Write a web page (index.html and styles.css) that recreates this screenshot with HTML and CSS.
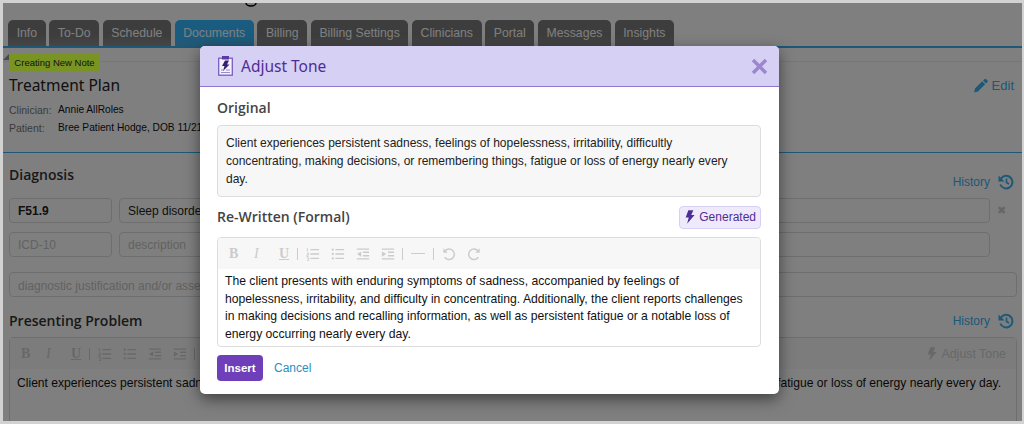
FILE: index.html
```html
<!DOCTYPE html>
<html lang="en">
<head>
<meta charset="utf-8">
<title>Adjust Tone</title>
<link rel="stylesheet" href="styles.css">
</head>
<body>
<svg class="defs" width="0" height="0" aria-hidden="true">
  <defs>
    <symbol id="i-ol" viewBox="0 0 16 16"><path d="M5 3h10M5 8h10M5 13h10" stroke="currentColor" stroke-width="1.5" fill="none"/><path d="M1.5 1v4M1 7h2v2H1v2h2M1 12.500h2v3H1" stroke="currentColor" stroke-width="1" fill="none"/></symbol>
    <symbol id="i-ul" viewBox="0 0 16 16"><path d="M5 3h10M5 8h10M5 13h10" stroke="currentColor" stroke-width="1.500" fill="none"/><circle cx="2" cy="3" r="1.300" fill="currentColor"/><circle cx="2" cy="8" r="1.300" fill="currentColor"/><circle cx="2" cy="13" r="1.300" fill="currentColor"/></symbol>
    <symbol id="i-out" viewBox="0 0 16 16"><path d="M1 2.500h14M8 6h7M8 10h7M1 13.500h14" stroke="currentColor" stroke-width="1.500" fill="none"/><path d="M6 5v6L1 8z" fill="currentColor"/></symbol>
    <symbol id="i-in" viewBox="0 0 16 16"><path d="M1 2.500h14M8 6h7M8 10h7M1 13.500h14" stroke="currentColor" stroke-width="1.500" fill="none"/><path d="M1 5v6l5-3z" fill="currentColor"/></symbol>
    <symbol id="i-undo" viewBox="0 0 16 16"><path d="M3.500 4.500A6 6 0 1 1 3 11.500" stroke="currentColor" stroke-width="1.700" fill="none"/><path d="M1.500 1.500v5h5z" fill="currentColor"/></symbol>
    <symbol id="i-redo" viewBox="0 0 16 16"><path d="M12.500 4.500A6 6 0 1 0 13 11.500" stroke="currentColor" stroke-width="1.700" fill="none"/><path d="M14.500 1.500v5h-5z" fill="currentColor"/></symbol>
    <symbol id="i-bolt" viewBox="0 0 12 16"><path d="M4 0h6L7.500 5.500H11.500L2.500 16 4.500 8.500H.8z" fill="currentColor"/></symbol>
    <symbol id="i-hist" viewBox="0 0 16 16"><path d="M3 4.500A6.300 6.300 0 1 1 2.300 10.500" stroke="currentColor" stroke-width="2" fill="none"/><path d="M.5 1.500v6h6z" fill="currentColor"/><path d="M8.500 4.500v4l2.500 1.500" stroke="currentColor" stroke-width="1.600" fill="none"/></symbol>
  </defs>
</svg>

<div class="frame">
  <div class="page">
    <div class="topbar"><svg class="arc" width="12" height="4" viewBox="0 0 12 4"><path d="M1 0a5 3 0 0 0 10 0" stroke="#000" stroke-width="1.500" fill="none"/></svg></div>
    <nav class="tabs">
      <a class="tab">Info</a><a class="tab">To-Do</a><a class="tab">Schedule</a><a class="tab tab-active">Documents</a><a class="tab">Billing</a><a class="tab">Billing Settings</a><a class="tab">Clinicians</a><a class="tab">Portal</a><a class="tab">Messages</a><a class="tab">Insights</a>
    </nav>
    <div class="note-bar"><span class="ribbon">Creating New Note</span></div>
    <section class="plan">
      <div class="plan-title">
        <h1>Treatment Plan</h1>
        <a class="link edit"><svg width="14" height="15" viewBox="0 0 16 16"><path d="M11.800.8a1.500 1.500 0 0 1 2.100 0l1.300 1.300a1.500 1.500 0 0 1 0 2.100L13.700 5.700 10.300 2.300zM9.400 3.200l3.400 3.400-8.300 8.300-4.300 1 .9-4.400z" fill="currentColor"/></svg>Edit</a>
      </div>
      <dl class="meta"><dt>Clinician:</dt><dd>Annie AllRoles</dd></dl>
      <dl class="meta"><dt>Patient:</dt><dd>Bree Patient Hodge, DOB 11/21/1990</dd></dl>
    </section>
    <section class="main">
      <div class="sec-head"><h2>Diagnosis</h2><a class="link hist hist-low">History<svg width="16" height="16"><use href="#i-hist"/></svg></a></div>
      <div class="dx-row"><div class="field code">F51.9</div><div class="field desc">Sleep disorder not due to a substance or known physiological condition, unspecified</div><span class="remove">&#10006;</span></div>
      <div class="dx-row"><div class="field code ph">ICD-10</div><div class="field desc ph">description</div><span class="remove"></span></div>
      <div class="field just ph">diagnostic justification and/or assessment</div>
      <div class="sec-head sec-two"><h2>Presenting Problem</h2><a class="link hist">History<svg width="16" height="16"><use href="#i-hist"/></svg></a></div>
      <div class="bg-editor">
        <div class="bg-toolbar">
          <span class="tb tb-b">B</span><span class="tb tb-i">I</span><span class="tb tb-u">U</span><span class="sep"></span>
          <svg class="ic"><use href="#i-ol"/></svg><svg class="ic"><use href="#i-ul"/></svg><svg class="ic"><use href="#i-out"/></svg><svg class="ic"><use href="#i-in"/></svg><span class="sep"></span>
          <span class="adjust"><svg width="10" height="14"><use href="#i-bolt"/></svg>Adjust Tone</span>
        </div>
        <p class="bg-text">Client experiences persistent sadness, feelings of hopelessness, irritability, difficultly concentrating, making decisions, or remembering things, fatigue or loss of energy nearly every day.</p>
      </div>
    </section>
    <div class="overlay"></div>
    <div class="modal">
      <header class="m-head">
        <div class="m-title">
          <svg width="15" height="20" viewBox="0 0 15 20"><rect x=".7" y="2.200" width="13.600" height="17" fill="#f4f1fd" stroke="#7a5cc0" stroke-width="1.300"/><rect x="4" y="0" width="7" height="3.500" fill="#5b3aa6"/><path d="M7 4.500h4L9 8.500h2.500L5 15l1.500-5H4z" fill="#33206e"/><path d="M3 14h3M8 14h4M3 16.500h9" stroke="#9a8bc9" stroke-width="1"/></svg>
          <span>Adjust Tone</span>
        </div>
        <svg class="m-close" width="17" height="17" viewBox="0 0 17 17"><path d="M2 2l13 13M15 2L2 15" stroke="currentColor" stroke-width="3.400"/></svg>
      </header>
      <div class="m-body">
        <h3>Original</h3>
        <div class="orig">Client experiences persistent sadness, feelings of hopelessness, irritability, difficultly concentrating, making decisions, or remembering things, fatigue or loss of energy nearly every day.</div>
        <div class="rw-head">
          <h3>Re-Written (Formal)</h3>
          <span class="gen"><svg width="10" height="14"><use href="#i-bolt"/></svg>Generated</span>
        </div>
        <div class="m-editor">
          <div class="m-toolbar">
            <span class="tb tb-b">B</span><span class="tb tb-i">I</span><span class="tb tb-u">U</span><span class="sep"></span>
            <svg class="ic"><use href="#i-ol"/></svg><svg class="ic"><use href="#i-ul"/></svg><svg class="ic"><use href="#i-out"/></svg><svg class="ic"><use href="#i-in"/></svg><span class="sep"></span>
            <span class="dash"></span><span class="sep"></span>
            <svg class="ic"><use href="#i-undo"/></svg><svg class="ic"><use href="#i-redo"/></svg>
          </div>
          <p class="rw-text">The client presents with enduring symptoms of sadness, accompanied by feelings of hopelessness, irritability, and difficulty in concentrating. Additionally, the client reports challenges in making decisions and recalling information, as well as persistent fatigue or a notable loss of energy occurring nearly every day.</p>
        </div>
        <div class="m-actions"><button class="insert" type="button">Insert</button><a class="cancel">Cancel</a></div>
      </div>
    </div>
  </div>
</div>
</body>
</html>
```
FILE: styles.css
```css
* { box-sizing: border-box; }
html, body { margin: 0; height: 424px; overflow: hidden; }
body { font-family: "Liberation Sans", Arial, sans-serif; background: #d2d2d2; }
.defs { position: absolute; }
.frame { height: 424px; padding: 3px 2px 3px 3px; }
.page { position: relative; height: 418px; background: #fff; overflow: hidden; color: #222; }
.topbar { height: 17px; padding-left: 242px; line-height: 0; }
.arc { display: block; }
.tabs { display: flex; gap: 3.500px; padding-left: 5px; height: 28px; border-bottom: 2px solid #3bb0f0; }
.tab { height: 26px; padding: 0 8.650px; border-radius: 5px 5px 0 0; background: linear-gradient(#7a7a7a 55%, #8c8c8c); color: #fff; font-size: 12.250px; line-height: 26px; }
.tab-active { background: linear-gradient(#34b8ff 70%, #4fb0e0); }
.note-bar { height: 14px; border-bottom: 1px solid #eee; padding-left: 6px; position: relative; }
.ribbon { display: block; width: 91px; height: 17px; margin-top: 6px; position: absolute; background: #7a9424; color: #111; font-size: 9.500px; line-height: 18px; text-align: center; z-index: 1; }
.ribbon::before { content: ""; position: absolute; left: -6px; top: 0; border: 3px solid transparent; border-right-color: #4a4a4a; border-bottom-color: #4a4a4a; }
.plan { height: 91px; padding: 12px 8px 0 6px; border-bottom: 1px solid #3bb0f0; }
.plan-title { display: flex; justify-content: space-between; align-items: center; height: 22px; margin-bottom: 8px; }
h1 { margin: 0; font: 400 15.500px/22px "Noto Sans", sans-serif; color: #222; }
.link { color: #3ab0ee; font-size: 13px; display: flex; align-items: center; }
.edit { gap: 4px; }
.meta { display: flex; margin: 0 0 6px; font-size: 10.500px; line-height: 12px; }
.meta dt { width: 49px; color: #777; }
.meta dd { margin: 0; color: #111; font-size: 10.200px; }
.main { padding: 11px 5px 0 6px; }
.sec-head { display: flex; justify-content: space-between; align-items: center; height: 22px; margin-bottom: 12px; padding-right: 3px; }
h2 { margin: 0; font: 600 14px/22px "Open Sans", "Noto Sans", sans-serif; color: #333; }
.hist { gap: 8px; font-size: 12px; }
.hist-low { margin-top: 13px; }
.dx-row { display: flex; gap: 7px; margin-bottom: 9px; align-items: center; }
.field { height: 25px; border: 1px solid #ddd; border-radius: 4px; padding: 0 8px; font-size: 12px; line-height: 24px; color: #222; white-space: nowrap; overflow: hidden; background: #fff; }
.ph { color: #c4c4c4; }
.code { width: 103px; font-weight: 700; }
.code.ph { font-weight: 400; }
.desc { flex: 1; }
.remove { width: 20px; font-size: 11px; color: #ccc; }
.just { margin-top: 15px; line-height: 26px; }
.sec-two { margin-top: 13px; margin-bottom: 5px; }
.bg-editor { height: 90px; border: 1px solid #ddd; border-radius: 4px; }
.bg-toolbar { display: flex; align-items: center; height: 31px; padding: 0 10px; background: #f9f9f9; color: #d0d0d0; }
.bg-text { margin: 0; padding: 5px 7px; font-size: 12.120px; line-height: 18px; white-space: nowrap; color: #111; }
.adjust { margin-left: auto; display: flex; gap: 4px; align-items: center; font-size: 12.400px; color: #d0d0d0; }
.tb { width: 25px; text-align: left; padding-left: 1px; font: 700 14px/1 "Liberation Serif", serif; }
.tb-i { font-style: italic; font-weight: 400; }
.tb-u { text-decoration: underline; width: 19px; }
.sep { width: 1px; height: 12px; background: currentColor; margin: 0 8px 0 -4px; }
.tb + .sep { margin-left: 0; }
.dash + .sep { margin-left: -3px; }
.ic { width: 14px; height: 14px; margin-right: 11px; }
.dash { width: 14px; height: 1.500px; background: currentColor; margin-right: 11px; }
.overlay { position: absolute; inset: 0; background: rgba(0, 0, 0, .5); }
.modal { position: absolute; left: 197px; top: 43px; width: 579px; height: 348px; background: #fff; border-radius: 5px; box-shadow: 0 5px 15px rgba(0, 0, 0, .5); overflow: hidden; z-index: 2; }
.m-head { display: flex; justify-content: space-between; align-items: center; height: 41px; padding: 0 11px 0 18px; background: #d6d0f5; border-bottom: 1px solid #8f74cf; }
.m-title { display: flex; align-items: center; gap: 8px; font: 400 15.500px/22px "Noto Sans", sans-serif; color: #4f2d96; }
.m-close { color: #9c86d0; }
.m-body { padding: 11px 18px 0 17px; }
h3 { margin: 0; font: 600 14px/20px "Open Sans", "Noto Sans", sans-serif; color: #444; }
.orig { height: 72px; margin-top: 7px; padding: 8px 20px 8px 8px; border: 1px solid #ddd; border-radius: 4px; background: #f7f7f7; font-size: 12.030px; line-height: 18px; color: #222; }
.rw-head { display: flex; justify-content: space-between; align-items: center; height: 24px; margin-top: 8px; }
.gen { display: flex; align-items: center; gap: 4px; height: 23px; padding: 0 4px 0 5px; border: 1px solid #d6d0f5; border-radius: 4px; background: #efeafb; font-size: 12px; color: #4f2d96; }
.m-editor { height: 110px; margin-top: 8px; border: 1px solid #ddd; border-radius: 4px; overflow: hidden; }
.m-toolbar { display: flex; align-items: center; height: 31px; padding: 0 10px; background: #f7f7f7; color: #ccc; }
.rw-text { margin: 0; padding: 4px 15px 4px 7px; font-size: 12.180px; line-height: 17.600px; color: #111; }
.m-actions { display: flex; align-items: center; gap: 11px; margin-top: 8px; }
.insert { width: 46px; height: 26px; padding: 0; border: 0; border-radius: 4px; background: #6f3fba; color: #fff; font: 700 11.500px "Liberation Sans", sans-serif; }
.cancel { font-size: 12px; color: #2a8fc4; }
```
